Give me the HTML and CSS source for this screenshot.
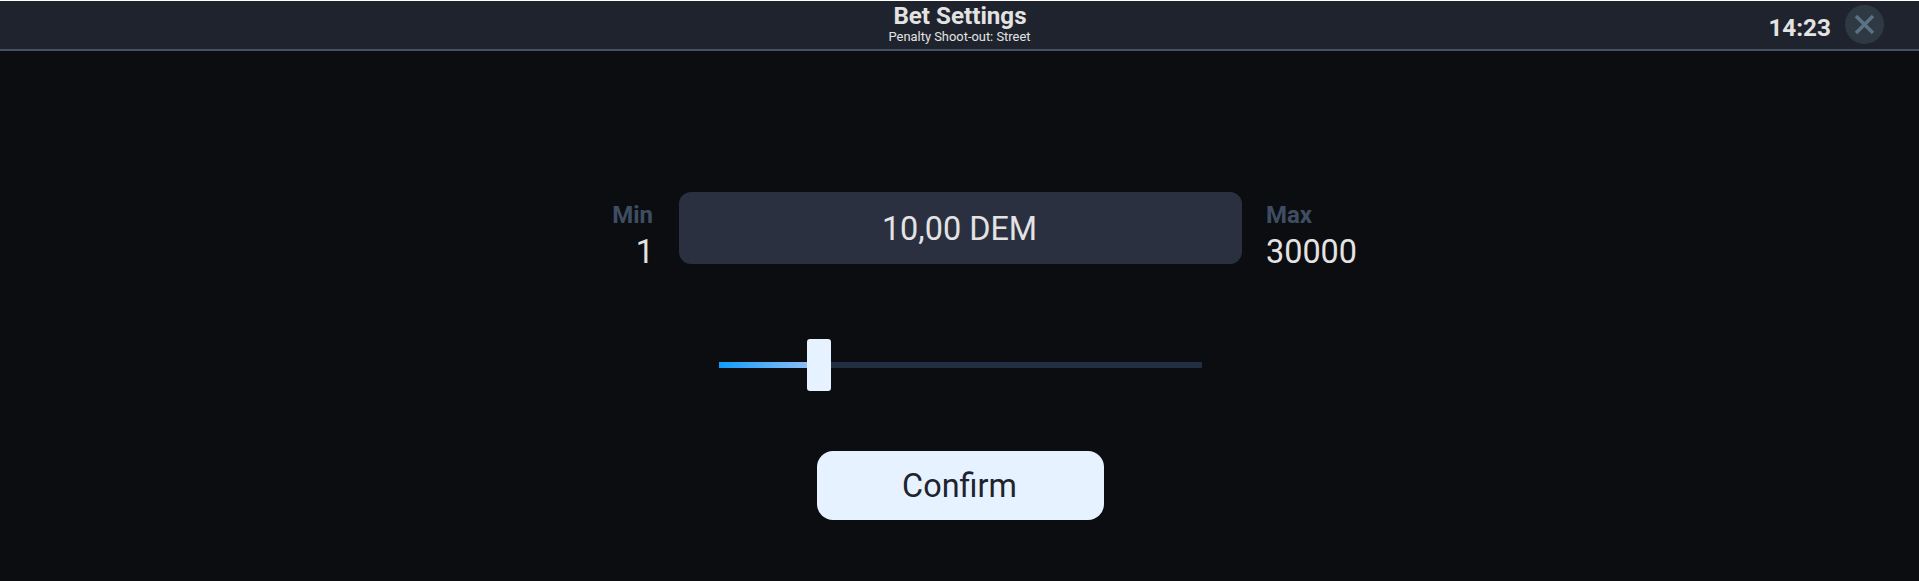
FILE: index.html
```
<!doctype html>
<html lang="en">
  <head>
    <meta charset="utf-8">
    <meta name="viewport" content="width=device-width, initial-scale=1.0">
    <title>Bet Settings</title>
    <link rel="stylesheet" href="styles.css">
  </head>
  <body>
    <header class="header">
      <div class="heading">
        <h1 class="title">Bet Settings</h1>
        <p class="subtitle">Penalty Shoot-out: Street</p>
      </div>
      <div class="tools">
        <span class="clock">14:23</span>
        <button class="close" aria-label="Close">
          <svg width="39" height="39" viewBox="0 0 39 39">
            <path d="M11 11L28 28M28 11L11 28" stroke="#5b7282" stroke-width="3.6" fill="none"/>
          </svg>
        </button>
      </div>
    </header>

    <main class="settings">
      <div class="bet">
        <div class="limit limit-min">
          <span class="limit-label">Min</span>
          <span class="limit-value">1</span>
        </div>
        <div class="amount">10,00 DEM</div>
        <div class="limit">
          <span class="limit-label">Max</span>
          <span class="limit-value">30000</span>
        </div>
      </div>
      <div class="slider">
        <div class="slider-fill"></div>
        <div class="slider-thumb"></div>
        <div class="slider-rest"></div>
      </div>
      <button class="confirm">Confirm</button>
    </main>
  </body>
</html>
```
FILE: styles.css
```
*{
  box-sizing: border-box;
}
body{
  margin: 0;
  height: 100vh;
  overflow: hidden;
  background: #0c0d11;
  color: #e3e3e3;
  font-family: Roboto, sans-serif;
}
button{
  border: 0;
  padding: 0;
  font-family: inherit;
}

.header{
  display: grid;
  grid-template-columns: 1fr auto 1fr;
  height: 51px;
  border-top: 1px solid #fff;
  border-bottom: 2px solid #425166;
  background: #1f232d;
}
.heading{
  grid-column: 2;
  text-align: center;
}
.title{
  margin: 0;
  padding: 1px 0 0 1px;
  font-size: 24.2px;
  font-weight: 700;
  line-height: 28px;
}
.subtitle{
  margin: 0;
  font-size: 12.9px;
  line-height: 14px;
}
.tools{
  display: flex;
  justify-content: flex-end;
  align-items: flex-start;
  gap: 14px;
  padding: 4px 35px 0 0;
}
.clock{
  font-size: 24.3px;
  font-weight: 700;
  line-height: 45.5px;
}
.close{
  width: 39px;
  height: 39px;
  border-radius: 50%;
  background: #2f3944;
}
.close svg{
  display: block;
}

.settings{
  display: flex;
  flex-direction: column;
  align-items: center;
  padding: 141px 0 0 2px;
}
.bet{
  display: grid;
  grid-template-columns: 1fr 563px 1fr;
  grid-template-rows: 72px;
  column-gap: 24px;
  width: 100%;
}
.limit{
  display: flex;
  flex-direction: column;
  padding-top: 3px;
}
.limit-min{
  align-items: flex-end;
  padding-right: 1px;
}
.limit-min .limit-label{
  padding-right: 1px;
}
.limit-label{
  color: #3f4d63;
  font-size: 24px;
  font-weight: 700;
  line-height: 40px;
}
.limit-value{
  font-size: 32.4px;
  line-height: 35px;
}
.amount{
  padding-right: 2px;
  border-radius: 12px;
  background: #2a3040;
  font-size: 32.4px;
  line-height: 74px;
  text-align: center;
}

.slider{
  display: flex;
  align-items: center;
  width: 483px;
  height: 52px;
  margin-top: 75px;
}
.slider-fill{
  width: 88px;
  height: 6px;
  background: linear-gradient(90deg, #109dfb, #8cbcf6);
}
.slider-thumb{
  width: 24px;
  height: 52px;
  border-radius: 3px;
  background: #e6f2ff;
}
.slider-rest{
  flex: 1;
  height: 6px;
  background: linear-gradient(#1d3148, #242c3b);
}

.confirm{
  width: 287px;
  height: 69px;
  margin-top: 60px;
  padding: 1px 2px 0 0;
  border-radius: 16px;
  background: #e6f2ff;
  color: #1f232d;
  font-size: 32.4px;
}
```
